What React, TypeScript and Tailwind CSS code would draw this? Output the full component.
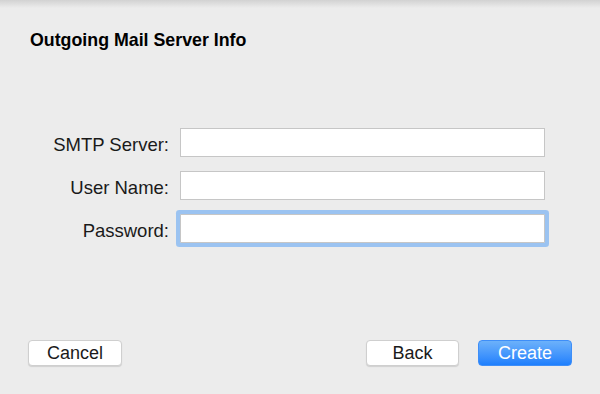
export default function App() {
  const fields = [
    { label: "SMTP Server:", focused: false },
    { label: "User Name:", focused: false },
    { label: "Password:", focused: true },
  ];
  return (
    <div className="w-[600px] h-[394px] bg-[#ececec] relative flex flex-col font-['Liberation_Sans',Arial,sans-serif] text-[#1a1a1a]">
      <div className="absolute top-0 left-0 right-0 h-[8px] bg-gradient-to-b from-[#d2d2d2] to-[#ececec]/0" />
      <h1 className="pl-[30px] pt-[30px] text-[17.8px] font-bold leading-[20px] text-black">
        Outgoing Mail Server Info
      </h1>
      <div className="mt-[78px] flex flex-col gap-[14px]">
        {fields.map((f) => (
          <div key={f.label} className="flex items-center">
            <label className="w-[170px] text-right text-[18.5px] leading-[21px] pr-[1px] mt-[4px]">{f.label}</label>
            <input
              type={f.focused ? "password" : "text"}
              className={
                "ml-[10px] block w-[365px] h-[29px] bg-white border border-[#c6c6c6] outline-none" +
                (f.focused ? " ring-4 ring-[#9bc3f1] rounded-[1px]" : "")
              }
            />
          </div>
        ))}
      </div>
      <div className="mt-auto mb-[28px] flex items-center px-[28px]">
        <button className="w-[94px] h-[26px] bg-white rounded-[4px] border border-[#cfcfcf] shadow-[0_1px_1px_rgba(0,0,0,0.12)] text-[18px] leading-none">
          Cancel
        </button>
        <div className="flex-1" />
        <button className="w-[93px] h-[26px] bg-white rounded-[4px] border border-[#cfcfcf] shadow-[0_1px_1px_rgba(0,0,0,0.12)] text-[18px] leading-none">
          Back
        </button>
        <button className="ml-[19px] w-[94px] h-[26px] rounded-[4px] bg-gradient-to-b from-[#6cb1fa] to-[#1d7ffd] border border-[#3e8ef8] text-white text-[18px] leading-none">
          Create
        </button>
      </div>
    </div>
  );
}
